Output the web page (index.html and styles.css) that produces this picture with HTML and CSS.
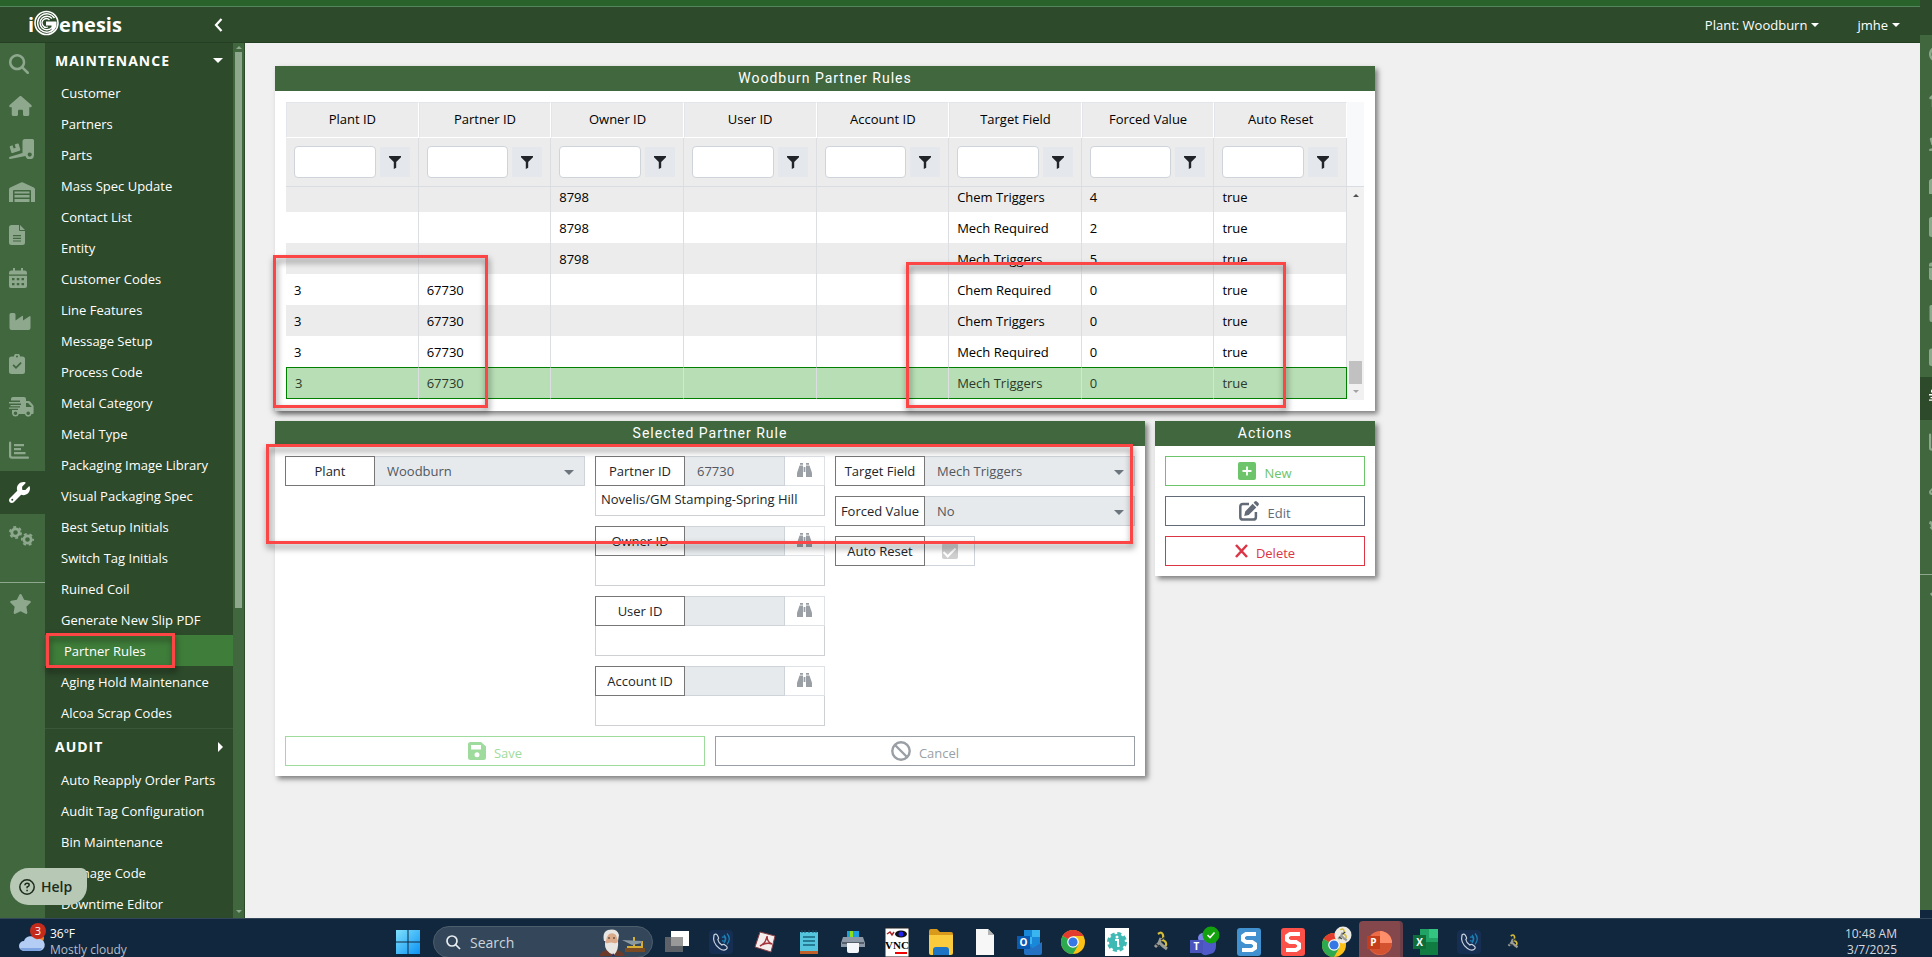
FILE: index.html
```html
<!DOCTYPE html>
<html lang="en">
<head>
    <meta charset="UTF-8">
    <meta name="viewport" content="width=device-width, initial-scale=1.0">
    <title>iGenesis - Partner Rules</title>
    <link rel="stylesheet" href="styles.css">
</head>
<body>

    <!-- icon set -->
    <svg class="sprite" aria-hidden="true">
        <symbol id="i-search" viewBox="0 0 512 512"><path d="M416 208c0 45.900-14.900 88.300-40 122.700L502.600 457.400c12.500 12.500 12.500 32.800 0 45.300s-32.800 12.500-45.300 0L330.700 376c-34.400 25.200-76.800 40-122.700 40C93.100 416 0 322.900 0 208S93.100 0 208 0S416 93.100 416 208zM208 352a144 144 0 1 0 0-288 144 144 0 1 0 0 288z"/></symbol>
        <symbol id="i-home" viewBox="0 0 576 512"><path d="M575.800 255.500c0 18-15 32.100-32 32.100h-32l.7 160.200V472c0 22.100-17.900 40-40 40H392c-22.100 0-40-17.900-40-40V384c0-17.700-14.300-32-32-32H256c-17.700 0-32 14.300-32 32v88c0 22.100-17.900 40-40 40H104c-22.100 0-40-17.900-40-40V287.600H32c-18 0-32-14-32-32.100c0-9 3-17 10-24L266.400 8c7-7 15-8 22-8s15 2 21 7L564.800 231.500c8 7 12 15 11 24z"/></symbol>
        <symbol id="i-ramp" viewBox="0 0 25 20"><path fill-rule="evenodd" d="M16 0h7.500Q25 0 25 1.500V16a4.300 4.300 0 0 1-8.500 1L1.200 20Q0 20 0 19t1-1.200L13.500 14V2.500Q13.500 0 16 0zM20.700 13.500a2 2 0 1 0 0 4.200 2 2 0 1 0 0-4.200zM1.500 7l2-.7 1.200 3.200 2-.7-1-3.300L8.500 4.600q1-.3 1.300.6l1.500 5.300q.2 1-.7 1.300l-7 2.300q-1 .2-1.300-.7L.8 8.300q-.2-1 .7-1.300z"/></symbol>
        <symbol id="i-warehouse" viewBox="0 0 26 20"><path d="M0 20V7.300Q0 6 1.200 5.400L12 .4q1-.4 2 0l10.800 5Q26 6 26 7.300V20h-4V9q0-1-1-1H5Q4 8 4 9v11zM5.500 9.500h15v2h-15zM5.500 13h15v2.500h-15zM5.500 17h15v3h-15z"/></symbol>
        <symbol id="i-file" viewBox="0 0 16 20"><path fill-rule="evenodd" d="M2.500 0H10v5q0 1 1 1h5v11.500q0 2.500-2.500 2.500h-11Q0 20 0 17.500v-15Q0 0 2.500 0zM11 0l5 5h-5zM4 10v1.200h8V10zM4 12.700v1.200h8v-1.200zM4 15.400v1.200h8v-1.200z"/></symbol>
        <symbol id="i-calendar" viewBox="0 0 18 20"><path fill-rule="evenodd" d="M4 0h2v2.500h6V0h2v2.500h2Q18 2.500 18 5v1.500H0V5q0-2.500 2-2.500h2zM0 7.700h18V18q0 2-2 2H2q-2 0-2-2zM3 10v2.300h2.500V10zM7.800 10v2.300h2.500V10zM12.500 10v2.300H15V10zM3 15v2.300h2.500V15zM7.800 15v2.300h2.500V15zM12.500 15v2.300H15V15z"/></symbol>
        <symbol id="i-industry" viewBox="0 0 21 20"><path d="M1.500 2h3Q6 2 6 3.500v6L12.500 5q1-.6 1 .6v4L20 5.200q1-.6 1 .6V17q0 2-2 2H2q-2 0-2-2V3.500Q0 2 1.500 2z"/></symbol>
        <symbol id="i-clipboard" viewBox="0 0 16 20"><path fill-rule="evenodd" d="M5 2.500a3 3 0 0 1 6 0h2.500Q16 2.500 16 5v12.500q0 2.500-2.500 2.500h-11Q0 20 0 17.500V5q0-2.500 2.500-2.500zM8 1.600a1 1 0 1 0 0 2 1 1 0 1 0 0-2zM12.700 9.200l-1.200-1.200L7 12.500l-2.300-2.200-1.200 1.200L7 15z"/></symbol>
        <symbol id="i-truck" viewBox="0 0 25 20"><path fill-rule="evenodd" d="M4 0h11q2 0 2 2v2h2.500q1 0 1.500.6L24 8q.6.600.6 1.400V15q.4 2-1 2h-1a3.500 3.500 0 0 1-6.800 0h-6a3.500 3.500 0 0 1-6.800-.2V13h6v-1.200H0v-1.300h11V9.200H1.500V7.900H12V6.400H0V5h11V3.600H2V2q0-2 2-2zM17 6v4h5.500v-.6L19 6zM6.500 14.500a1.800 1.800 0 1 0 0 3.600 1.800 1.800 0 1 0 0-3.600zM19.200 14.500a1.800 1.800 0 1 0 0 3.600 1.800 1.800 0 1 0 0-3.600z"/></symbol>
        <symbol id="i-chart" viewBox="0 0 20 20"><path d="M1 1.500q1.200 0 1.200 1.200v12.800q0 1 1 1H19q1 0 1 1.200t-1 1.100H3Q0 18.800 0 16V2.700Q0 1.500 1 1.500zM5 4h10v2.300H5zM5 8h7v2.300H5zM5 12h11.500v2.300H5z"/></symbol>
        <symbol id="i-wrench" viewBox="0 0 512 512"><path d="M352 320c88.400 0 160-71.600 160-160c0-15.300-2.200-30.100-6.200-44.200c-3.100-10.800-16.400-13.200-24.300-5.300l-76.800 76.800c-3 3-7.100 4.700-11.300 4.700H336c-8.800 0-16-7.200-16-16V118.600c0-4.200 1.700-8.300 4.700-11.300l76.800-76.800c7.900-7.900 5.400-21.200-5.300-24.300C382.100 2.200 367.300 0 352 0C263.600 0 192 71.600 192 160c0 19.100 3.400 37.500 9.500 54.500L19.900 396.100C7.200 408.800 0 426.100 0 444.100C0 481.600 30.400 512 67.900 512c18 0 35.300-7.200 48-19.900L297.500 310.500c17 6.200 35.400 9.500 54.500 9.500zM80 408a24 24 0 1 1 0 48 24 24 0 1 1 0-48z"/></symbol>
        <symbol id="i-gears" viewBox="0 0 25 20"><g fill="none" stroke="currentColor"><circle cx="6.500" cy="6.500" r="3.700" stroke-width="2.800"/><circle cx="6.500" cy="6.500" r="5.600" stroke-width="1.800" stroke-dasharray="2.930 2.930"/><circle cx="18.500" cy="13.500" r="3.700" stroke-width="2.800"/><circle cx="18.500" cy="13.500" r="5.600" stroke-width="1.800" stroke-dasharray="2.930 2.930" stroke-dashoffset="1.500"/></g></symbol>
        <symbol id="i-star" viewBox="0 0 576 512"><path d="M316.900 18C311.600 7 300.400 0 288.100 0s-23.400 7-28.800 18L195 150.300 51.400 171.500c-12 1.800-22 10.200-25.700 21.700s-.7 24.200 7.900 32.700L137.800 329 113.200 474.700c-2 12 3 24.200 12.900 31.300s23 8 33.800 2.300l128.300-68.500 128.300 68.500c10.800 5.700 23.900 4.900 33.800-2.300s14.900-19.300 12.900-31.300L438.500 329 542.700 225.900c8.600-8.500 11.700-21.200 7.900-32.700s-13.700-19.900-25.700-21.700L381.200 150.300 316.900 18z"/></symbol>
        <symbol id="i-filter" viewBox="0 0 12 13"><path d="M0 0h12v1.200L7.200 6v5.800L4.800 13V6L0 1.200z"/></symbol>
        <symbol id="i-binoculars" viewBox="0 0 15 14"><path d="M3 0h3v1.800H3zM9 0h3v1.800H9zM2.500 2.500H6V14H0v-3.500Q0 9 1 7zM9 2.500h3.500L14 7q1 2 1 3.500V14H9zM6.600 4h1.800v5H6.600z"/></symbol>
        <symbol id="i-phone" viewBox="0 0 24 24"><rect width="24" height="24" rx="4" fill="#162e52"/><path d="M5 5q2-2 3.500.5l1 2q.5 1-.7 2 .7 3.500 4 5.500 1.300-1 2.400-.4l2 1.400q2 1.600 0 3.300-2.700 2-6.700-.8Q3 13 5 5z" fill="none" stroke="#c8d2df" stroke-width="1.200"/><path d="M13 10.500a2 2 0 1 0 0-3M15 13q3.500-4 0-8M18 14.500q4.500-6 0-11" fill="none" stroke="#1b7fb4" stroke-width="1.200"/></symbol>
        <symbol id="i-chrome" viewBox="0 0 24 24"><circle cx="12" cy="12" r="12" fill="#fbc116"/><path d="M12 12L1.600 6A12 12 0 0 1 22.400 6H12z" fill="#e33b2e"/><path d="M12 12L1.600 6A12 12 0 0 0 12 24l5.200-9z" fill="#2da94f"/><circle cx="12" cy="12" r="5.800" fill="#fff"/><circle cx="12" cy="12" r="4.600" fill="#3577e5"/></symbol>
        <symbol id="i-key" viewBox="0 0 24 24"><path d="M9 4q4-3 5 1t-2 5q4 0 5 3t-3 4" fill="none" stroke="#d5bd3a" stroke-width="2.200"/><path d="M12 8l-2 5-4 4M10 12l4 4 4 3" fill="none" stroke="#9a9c98" stroke-width="3"/><path d="M7 14l4 3M12 10l4-3" stroke="#343a3c" stroke-width="1.500"/></symbol>
    </svg>

    <div class="desktop">
        <div class="window">
            <div class="title-strip"></div>
            <header class="topbar">
                <a class="logo" href="#" aria-label="iGenesis">
                    <span>i</span>
                    <svg width="25" height="26" viewBox="0 0 25 26" fill="none" stroke="#fff">
                        <circle cx="12.500" cy="13" r="11.500" stroke-width="1.600"/>
                        <path d="M20.500 8A9.200 9.200 0 1 0 20.500 18" stroke-width="1.400"/>
                        <path d="M18 8.500A6.800 6.800 0 1 0 18 17.500" stroke-width="1.400"/>
                        <path d="M15.500 10A4.300 4.300 0 1 0 14 17" stroke-width="1.300"/>
                        <path d="M12 11.500h10.500v5q-2 4-5 5v-6H12z" fill="#fff" stroke="none"/>
                    </svg>
                    <span>enesis</span>
                </a>
                <button class="collapse-btn" type="button" aria-label="Collapse menu">
                    <svg width="9" height="14" viewBox="0 0 9 14"><path d="M7.500 1L2 7l5.500 6" fill="none" stroke="#fff" stroke-width="2.200"/></svg>
                </button>
                <nav class="user-menu">
                    <a class="dropdown" href="#">Plant: Woodburn</a>
                    <a class="dropdown" href="#">jmhe</a>
                </nav>
            </header>

            <div class="app">
                <nav class="rail" aria-label="Modules">
                    <a href="#" aria-label="Search"><svg width="20" height="20"><use href="#i-search"/></svg></a>
                    <a href="#" aria-label="Home"><svg width="23" height="20"><use href="#i-home"/></svg></a>
                    <a href="#" aria-label="Receiving"><svg width="25" height="20"><use href="#i-ramp"/></svg></a>
                    <a href="#" aria-label="Warehouse"><svg width="26" height="20"><use href="#i-warehouse"/></svg></a>
                    <a href="#" aria-label="Orders"><svg width="16" height="20"><use href="#i-file"/></svg></a>
                    <a href="#" aria-label="Schedule"><svg width="18" height="20"><use href="#i-calendar"/></svg></a>
                    <a href="#" aria-label="Production"><svg width="22" height="20"><use href="#i-industry"/></svg></a>
                    <a href="#" aria-label="Quality"><svg width="16" height="20"><use href="#i-clipboard"/></svg></a>
                    <a href="#" aria-label="Shipping"><svg width="25" height="20"><use href="#i-truck"/></svg></a>
                    <a href="#" aria-label="Reports"><svg width="20" height="20"><use href="#i-chart"/></svg></a>
                    <a href="#" aria-label="Maintenance" class="active"><svg width="21" height="21"><use href="#i-wrench"/></svg></a>
                    <a href="#" aria-label="Settings"><svg width="25" height="20"><use href="#i-gears"/></svg></a>
                    <a href="#" aria-label="Favorites" class="favorites"><svg width="23" height="20"><use href="#i-star"/></svg></a>
                </nav>

                <nav class="sidebar" aria-label="Menu">
                    <h2 class="menu-title">Maintenance <span class="arrow-down"></span></h2>
                    <ul>
                        <li><a href="#">Customer</a></li>
                        <li><a href="#">Partners</a></li>
                        <li><a href="#">Parts</a></li>
                        <li><a href="#">Mass Spec Update</a></li>
                        <li><a href="#">Contact List</a></li>
                        <li><a href="#">Entity</a></li>
                        <li><a href="#">Customer Codes</a></li>
                        <li><a href="#">Line Features</a></li>
                        <li><a href="#">Message Setup</a></li>
                        <li><a href="#">Process Code</a></li>
                        <li><a href="#">Metal Category</a></li>
                        <li><a href="#">Metal Type</a></li>
                        <li><a href="#">Packaging Image Library</a></li>
                        <li><a href="#">Visual Packaging Spec</a></li>
                        <li><a href="#">Best Setup Initials</a></li>
                        <li><a href="#">Switch Tag Initials</a></li>
                        <li><a href="#">Ruined Coil</a></li>
                        <li><a href="#">Generate New Slip PDF</a></li>
                        <li><a href="#" class="active">Partner Rules</a></li>
                        <li><a href="#">Aging Hold Maintenance</a></li>
                        <li><a href="#">Alcoa Scrap Codes</a></li>
                    </ul>
                    <h2 class="menu-title divided">Audit <span class="arrow-right"></span></h2>
                    <ul>
                        <li><a href="#">Auto Reapply Order Parts</a></li>
                        <li><a href="#">Audit Tag Configuration</a></li>
                        <li><a href="#">Bin Maintenance</a></li>
                        <li><a href="#">Damage Code</a></li>
                        <li><a href="#">Downtime Editor</a></li>
                    </ul>
                </nav>
                <div class="menu-scroll">
                    <span class="tri-up"></span>
                    <div class="menu-track"><div class="menu-thumb"></div></div>
                    <span class="tri-down"></span>
                </div>

                <main class="content">
                    <section class="card rules-card">
                        <h1>Woodburn Partner Rules</h1>
                        <div class="grid">
                            <div class="grid-header">
                                <table>
                                    <thead>
                                        <tr>
                                            <th>Plant ID</th>
                                            <th>Partner ID</th>
                                            <th>Owner ID</th>
                                            <th>User ID</th>
                                            <th>Account ID</th>
                                            <th>Target Field</th>
                                            <th>Forced Value</th>
                                            <th>Auto Reset</th>
                                        </tr>
                                        <tr class="filters">
                                            <td><div class="filter"><input type="text" aria-label="Plant ID filter"><button type="button" aria-label="Filter Plant ID"><svg width="12" height="13"><use href="#i-filter"/></svg></button></div></td>
                                            <td><div class="filter"><input type="text" aria-label="Partner ID filter"><button type="button" aria-label="Filter Partner ID"><svg width="12" height="13"><use href="#i-filter"/></svg></button></div></td>
                                            <td><div class="filter"><input type="text" aria-label="Owner ID filter"><button type="button" aria-label="Filter Owner ID"><svg width="12" height="13"><use href="#i-filter"/></svg></button></div></td>
                                            <td><div class="filter"><input type="text" aria-label="User ID filter"><button type="button" aria-label="Filter User ID"><svg width="12" height="13"><use href="#i-filter"/></svg></button></div></td>
                                            <td><div class="filter"><input type="text" aria-label="Account ID filter"><button type="button" aria-label="Filter Account ID"><svg width="12" height="13"><use href="#i-filter"/></svg></button></div></td>
                                            <td><div class="filter"><input type="text" aria-label="Target Field filter"><button type="button" aria-label="Filter Target Field"><svg width="12" height="13"><use href="#i-filter"/></svg></button></div></td>
                                            <td><div class="filter"><input type="text" aria-label="Forced Value filter"><button type="button" aria-label="Filter Forced Value"><svg width="12" height="13"><use href="#i-filter"/></svg></button></div></td>
                                            <td><div class="filter"><input type="text" aria-label="Auto Reset filter"><button type="button" aria-label="Filter Auto Reset"><svg width="12" height="13"><use href="#i-filter"/></svg></button></div></td>
                                        </tr>
                                    </thead>
                                </table>
                            </div>
                            <div class="grid-body">
                                <div class="grid-rows">
                                    <table>
                                        <tbody>
                                            <tr><td></td><td></td><td>8798</td><td></td><td></td><td>Chem Triggers</td><td>4</td><td>true</td></tr>
                                            <tr><td></td><td></td><td>8798</td><td></td><td></td><td>Mech Required</td><td>2</td><td>true</td></tr>
                                            <tr><td></td><td></td><td>8798</td><td></td><td></td><td>Mech Triggers</td><td>5</td><td>true</td></tr>
                                            <tr><td>3</td><td>67730</td><td></td><td></td><td></td><td>Chem Required</td><td>0</td><td>true</td></tr>
                                            <tr><td>3</td><td>67730</td><td></td><td></td><td></td><td>Chem Triggers</td><td>0</td><td>true</td></tr>
                                            <tr><td>3</td><td>67730</td><td></td><td></td><td></td><td>Mech Required</td><td>0</td><td>true</td></tr>
                                            <tr class="selected"><td>3</td><td>67730</td><td></td><td></td><td></td><td>Mech Triggers</td><td>0</td><td>true</td></tr>
                                        </tbody>
                                    </table>
                                </div>
                                <div class="grid-scroll">
                                    <span class="tri-up"></span>
                                    <div class="grid-thumb"></div>
                                    <span class="tri-down"></span>
                                </div>
                            </div>
                        </div>
                        <div class="mark mark-ids"></div>
                        <div class="mark mark-values"></div>
                    </section>

                    <div class="lower">
                        <section class="card">
                            <h1>Selected Partner Rule</h1>
                            <form class="rule-form">
                                <div class="form-col">
                                    <div class="field">
                                        <label for="plant">Plant</label>
                                        <div class="select"><select id="plant" disabled><option>Woodburn</option></select></div>
                                    </div>
                                </div>
                                <div class="form-col">
                                    <div class="lookup">
                                        <div class="field">
                                            <label for="partner">Partner ID</label>
                                            <input id="partner" type="text" value="67730" disabled>
                                            <button type="button" disabled aria-label="Find partner"><svg width="15" height="14"><use href="#i-binoculars"/></svg></button>
                                        </div>
                                        <div class="lookup-name">Novelis/GM Stamping-Spring Hill</div>
                                    </div>
                                    <div class="lookup">
                                        <div class="field">
                                            <label for="owner">Owner ID</label>
                                            <input id="owner" type="text" disabled>
                                            <button type="button" disabled aria-label="Find owner"><svg width="15" height="14"><use href="#i-binoculars"/></svg></button>
                                        </div>
                                        <div class="lookup-name"></div>
                                    </div>
                                    <div class="lookup">
                                        <div class="field">
                                            <label for="user">User ID</label>
                                            <input id="user" type="text" disabled>
                                            <button type="button" disabled aria-label="Find user"><svg width="15" height="14"><use href="#i-binoculars"/></svg></button>
                                        </div>
                                        <div class="lookup-name"></div>
                                    </div>
                                    <div class="lookup">
                                        <div class="field">
                                            <label for="account">Account ID</label>
                                            <input id="account" type="text" disabled>
                                            <button type="button" disabled aria-label="Find account"><svg width="15" height="14"><use href="#i-binoculars"/></svg></button>
                                        </div>
                                        <div class="lookup-name"></div>
                                    </div>
                                </div>
                                <div class="form-col">
                                    <div class="field">
                                        <label for="target">Target Field</label>
                                        <div class="select"><select id="target" disabled><option>Mech Triggers</option></select></div>
                                    </div>
                                    <div class="field">
                                        <label for="forced">Forced Value</label>
                                        <div class="select"><select id="forced" disabled><option>No</option></select></div>
                                    </div>
                                    <div class="field">
                                        <label for="reset">Auto Reset</label>
                                        <div class="check"><input id="reset" type="checkbox" checked disabled></div>
                                    </div>
                                </div>
                                <div class="form-buttons">
                                    <button class="btn save" type="submit" disabled>
                                        <svg width="18" height="18" viewBox="0 0 18 18"><path fill-rule="evenodd" d="M2.500 0H13l5 4.500v11q0 2.500-2.500 2.500h-13Q0 18 0 15.500v-13Q0 0 2.500 0zM3 3v4.500h10V3zM9 10.200a2.500 2.500 0 1 0 0 5 2.500 2.500 0 1 0 0-5z"/></svg>
                                        <span>Save</span>
                                    </button>
                                    <button class="btn cancel" type="button" disabled>
                                        <svg width="20" height="20" viewBox="0 0 20 20"><path d="M10 1.300a8.700 8.700 0 1 0 0 17.400 8.700 8.700 0 1 0 0-17.400zM4 4l12 12" fill="none" stroke="currentColor" stroke-width="2.400"/></svg>
                                        <span>Cancel</span>
                                    </button>
                                </div>
                            </form>
                            <div class="mark mark-form"></div>
                        </section>

                        <section class="card">
                            <h1>Actions</h1>
                            <div class="actions">
                                <button class="btn new" type="button">
                                    <svg width="18" height="18" viewBox="0 0 18 18"><path fill-rule="evenodd" d="M2 0h14q2 0 2 2v14q0 2-2 2H2q-2 0-2-2V2Q0 0 2 0zM8.100 4.500v3.600H4.500v1.800h3.600v3.600h1.800V9.900h3.600V8.100H9.900V4.500z"/></svg>
                                    <span>New</span>
                                </button>
                                <button class="btn edit" type="button">
                                    <svg width="20" height="20" viewBox="0 0 20 20"><path d="M10 3H4Q1.300 3 1.300 5.700v10.200q0 2.700 2.700 2.700h10.200q2.700 0 2.700-2.700V11" fill="none" stroke="currentColor" stroke-width="2.500"/><path d="M13.600 2.700l3.700 3.700-7.600 7.600-4.500 1 1-4.500zM14.600 1.700l1.100-1.100q1.100-1 2.200 0l1.500 1.500q1 1.100 0 2.200l-1.100 1.100z"/></svg>
                                    <span>Edit</span>
                                </button>
                                <button class="btn delete" type="button">
                                    <svg width="13" height="16" viewBox="0 0 13 16"><path d="M1 2l11 12M12 2L1 14" fill="none" stroke="currentColor" stroke-width="2.500"/></svg>
                                    <span>Delete</span>
                                </button>
                            </div>
                        </section>
                    </div>
                </main>
            </div>

            <div class="mark mark-menu"></div>
            <button class="help" type="button">
                <svg width="16" height="16" viewBox="0 0 16 16" fill="none" stroke="#1c2b1c" stroke-width="1.500"><circle cx="8" cy="8" r="7.200"/><path d="M5.900 6.300q.2-2 2.200-2t2.100 1.700q0 1.200-2.100 2v1.200M8.100 10.800v1.500"/></svg>
                Help
            </button>
        </div>

        <!-- edge of the window on the next monitor -->
        <div class="next-window" aria-hidden="true">
            <div class="next-top"></div>
            <div class="rail">
                <span><svg width="20" height="20"><use href="#i-search"/></svg></span>
                <span><svg width="23" height="20"><use href="#i-home"/></svg></span>
                <span><svg width="25" height="20"><use href="#i-ramp"/></svg></span>
                <span><svg width="26" height="20"><use href="#i-warehouse"/></svg></span>
                <span><svg width="16" height="20"><use href="#i-file"/></svg></span>
                <span><svg width="18" height="20"><use href="#i-calendar"/></svg></span>
                <span><svg width="22" height="20"><use href="#i-industry"/></svg></span>
                <span><svg width="16" height="20"><use href="#i-clipboard"/></svg></span>
                <span class="active"><svg width="25" height="20"><use href="#i-truck"/></svg></span>
                <span><svg width="20" height="20"><use href="#i-chart"/></svg></span>
                <span><svg width="21" height="21"><use href="#i-wrench"/></svg></span>
                <span><svg width="25" height="20"><use href="#i-gears"/></svg></span>
                <span class="favorites"><svg width="23" height="20"><use href="#i-star"/></svg></span>
            </div>
            <div class="next-bottom"></div>
        </div>
    </div>

    <footer class="taskbar">
        <div class="weather">
            <svg width="27" height="30" viewBox="0 0 27 30">
                <circle cx="19" cy="15" r="6" fill="#f58220"/>
                <path d="M5 28a5 5 0 0 1 0-10 7 7 0 0 1 12.500-1.500A6 6 0 1 1 19 28z" fill="#b3cdf5"/>
                <path d="M5 28a5 5 0 0 1-4-3h22q-1 3-4 3z" fill="#7fa4e2"/>
                <circle cx="19" cy="8" r="8" fill="#c42b1c"/>
                <text x="19" y="12" class="badge-text">3</text>
            </svg>
            <div>
                <div>36°F</div>
                <div class="muted">Mostly cloudy</div>
            </div>
        </div>

        <div class="tasks">
            <button type="button" aria-label="Start">
                <svg width="24" height="24" viewBox="0 0 24 24"><defs><linearGradient id="win" x2="1" y2="1"><stop stop-color="#7fe0fb"/><stop offset="1" stop-color="#0a93f5"/></linearGradient></defs><path d="M0 0h11.500v11.500H0zM12.500 0H24v11.500H12.500zM0 12.500h11.500V24H0zM12.500 12.500H24V24H12.500z" fill="url(#win)"/></svg>
            </button>
            <label class="task-search">
                <svg width="15" height="15" viewBox="0 0 15 15" fill="none" stroke="#e8edf1" stroke-width="1.700"><circle cx="6" cy="6" r="5"/><path d="M9.500 9.500L14 14"/></svg>
                <input type="text" placeholder="Search" aria-label="Search">
                <svg width="47" height="27" viewBox="0 0 47 27">
                    <path d="M0 27q2-5 8-6h9q7 1 9 6z" fill="#6b3a2a"/><path d="M6 5q6-6 13 0v11q-6 9-13 0z" fill="#d9a98a"/><path d="M5 12Q3 3 9 1q9-2 11 5l-1 6-2-6q-3-3-7-1-3 3-3 7z" fill="#e8e6e2"/><path d="M6 13q1 2 3 1 3-1 6 0 3 1 4-2 1 9-4 14Q5 23 6 13z" fill="#e8e6e2"/><path d="M9 9h2M14 9h2" stroke="#3a2a22"/><path d="M14 24l2 3h-3z" fill="#1d2b7a"/>
                    <path d="M26 19h20v4H26z" fill="#7a4a22"/><path d="M34 8h2v11h-2zM42 12h2v7h-2zM28 17h16v2H28z" fill="#d6ad35"/><path d="M23 11l20 1v2l-10 2z" fill="#8a98a2"/>
                </svg>
            </label>
            <button type="button" aria-label="Task view"><svg width="24" height="24" viewBox="0 0 24 24"><path d="M6 1h18v15H6z" fill="#fff"/><path d="M0 7h18v15H0z" fill="#777" opacity=".75"/></svg></button>
            <button type="button" aria-label="Phone"><svg width="24" height="24"><use href="#i-phone"/></svg></button>
            <button type="button" aria-label="PDF reader"><svg width="22" height="22" viewBox="0 0 22 22"><path d="M6 1l15 4-4 16-16-5z" fill="#f4eeee" stroke="#8b4046"/><path d="M6 15q6-3 7-10 0 6 5 8-6-2-12 2z" fill="none" stroke="#a5353d" stroke-width="1.500"/></svg></button>
            <button type="button" aria-label="Notepad"><svg width="18" height="24" viewBox="0 0 18 24"><path d="M0 2h18v20H0z" fill="#55c5de"/><path d="M0 21h18v3H0z" fill="#c0612b"/><path d="M3 7h12M3 11h12M3 15h12" stroke="#17647d" stroke-width="1.500"/><path d="M2 0v3M5 0v3M9 0v3M13 0v3M16 0v3" stroke="#1d4f66"/></svg></button>
            <button type="button" aria-label="Printer"><svg width="24" height="22" viewBox="0 0 24 22"><path d="M6 0h12v8H6z" fill="#1e9de0"/><path d="M9 0h3v8H9z" fill="#8fe01a"/><path d="M2 6h20l2 6v4H0v-4z" fill="#8d99a6"/><path d="M1 11h22v2H1z" fill="#555f6b"/><path d="M6 12h12v8q0 2-2 2H8q-2 0-2-2z" fill="#f4f7fa"/></svg></button>
            <button type="button" aria-label="VNC"><svg width="24" height="30" viewBox="0 0 24 30"><path d="M0 1h24v29H0z" fill="#fff" stroke="#222"/><path d="M2 7l3-2 2 3 2-3" stroke="#a22" fill="none" stroke-width="1.500"/><ellipse cx="16" cy="7" rx="6" ry="3.500" fill="#111"/><circle cx="16" cy="7" r="2.500" fill="#22e"/><text x="12" y="22" class="vnc-text">VNC</text><path d="M10 26h12" stroke="#e00" stroke-width="2"/></svg></button>
            <button type="button" aria-label="File Explorer"><svg width="24" height="26" viewBox="0 0 24 26"><path d="M0 2Q0 0 2 0h6l3 3h11q2 0 2 2v3H0z" fill="#d99a1c"/><path d="M0 6h24v18q0 2-2 2H2q-2 0-2-2z" fill="#fbcb3e"/><path d="M4 26v-5q0-3 3-3h10q3 0 3 3v5z" fill="#1d74c4"/></svg></button>
            <button type="button" aria-label="Document"><svg width="18" height="26" viewBox="0 0 18 26"><path d="M0 0h12l6 6v20H0z" fill="#f7f7f7"/><path d="M12 0v6h6z" fill="#b5b5b5"/></svg></button>
            <button type="button" aria-label="Outlook"><svg width="25" height="25" viewBox="0 0 25 25"><path d="M7 0h16v20H7z" fill="#1a88d8"/><path d="M15 0h8v7h-8zM7 7h8v7H7z" fill="#39b5f0"/><path d="M7 13l9 5 9-6v11q0 2-2 2H9q-2 0-2-2z" fill="#2471c4"/><path d="M0 6h13v13H0z" fill="#0a5ab2"/><text x="6.500" y="16" class="app-letter">O</text></svg></button>
            <button type="button" aria-label="Chrome"><svg width="24" height="24"><use href="#i-chrome"/></svg></button>
            <button type="button" aria-label="Info"><svg width="24" height="28" viewBox="0 0 24 28"><path d="M0 0h24v28H0z" fill="#fff"/><circle cx="12" cy="14" r="8" fill="#3fb9b4"/><circle cx="12" cy="14" r="8.500" fill="none" stroke="#3fb9b4" stroke-width="3" stroke-dasharray="4 2.680"/><circle cx="12" cy="9" r="1.500" fill="#fff"/><path d="M10 12h3v6h1.500" fill="none" stroke="#fff" stroke-width="2"/></svg></button>
            <button type="button" aria-label="Key tool"><svg width="24" height="24"><use href="#i-key"/></svg></button>
            <button type="button" aria-label="Teams"><svg width="30" height="32" viewBox="0 0 30 32"><circle cx="13" cy="12" r="5" fill="#7b83eb"/><path d="M9 14h17v6q0 7-6 8-9 4-11-6z" fill="#5059c9"/><path d="M0 14h13v13H0z" fill="#4b53bc"/><text x="6.500" y="24" class="app-letter">T</text><circle cx="21" cy="9" r="8.500" fill="#13a10e"/><path d="M17.500 9l2.500 2.500 4.500-5" fill="none" stroke="#fff" stroke-width="1.600"/></svg></button>
            <button type="button" aria-label="Snagit"><svg width="24" height="28" viewBox="0 0 24 28"><rect width="24" height="28" rx="3" fill="#4190cf"/><path d="M19 6H9L6 8v4l3 2h6l3 2v4l-3 2H5" fill="none" stroke="#fff" stroke-width="4"/></svg></button>
            <button type="button" aria-label="Snagit Editor"><svg width="24" height="28" viewBox="0 0 24 28"><rect width="24" height="28" rx="3" fill="#fb5148"/><path d="M19 6H9L6 8v4l3 2h6l3 2v4l-3 2H5" fill="none" stroke="#fff" stroke-width="4"/></svg></button>
            <button type="button" aria-label="Chrome profile"><svg width="30" height="32" viewBox="0 0 30 32"><use href="#i-chrome" x="0" y="7" width="24" height="24"/><circle cx="21" cy="9" r="8.500" fill="#eceae4"/><use href="#i-key" x="12" y="1" width="17" height="17"/></svg></button>
            <button type="button" aria-label="PowerPoint" class="open"><svg width="25" height="26" viewBox="0 0 25 26"><circle cx="13" cy="13" r="12" fill="#ed6c47"/><path d="M13 1a12 12 0 0 1 12 12H13z" fill="#ff8f6b"/><path d="M25 13a12 12 0 0 1-22 6l10-6z" fill="#d35230"/><path d="M0 6h13v13H0z" fill="#c43e1c"/><text x="6.500" y="16" class="app-letter">P</text></svg></button>
            <button type="button" aria-label="Excel"><svg width="25" height="26" viewBox="0 0 25 26"><path d="M7 0h18v26H7z" fill="#21a366"/><path d="M16 0h9v9h-9z" fill="#33c481"/><path d="M7 13h18v13H7z" fill="#107c41"/><path d="M0 6h13v14H0z" fill="#0f6d39"/><text x="6.500" y="17" class="app-letter">X</text></svg></button>
            <button type="button" aria-label="Phone calls"><svg width="24" height="24"><use href="#i-phone"/></svg></button>
            <button type="button" aria-label="Keys"><svg width="18" height="18"><use href="#i-key"/></svg></button>
        </div>

        <div class="clock">
            <div>10:48 AM</div>
            <div>3/7/2025</div>
        </div>
    </footer>

</body>
</html>
```

FILE: styles.css
```css
* {
    box-sizing: border-box;
}
body {
    margin: 0;
    height: 100vh;
    display: flex;
    flex-direction: column;
    overflow: hidden;
    background-color: #11273d;
    font-family: 'Open Sans', 'Noto Sans', sans-serif;
    font-size: 13px;
    color: #212529;
}
a {
    color: inherit;
    text-decoration: none;
}
button, input, select {
    font-family: inherit;
    font-size: inherit;
    margin: 0;
}
svg {
    display: block;
    flex: none;
}
svg:not([fill]) {
    fill: currentColor;
}
.sprite {
    position: absolute;
    width: 0;
    height: 0;
}
.desktop {
    flex: 1;
    min-height: 0;
    display: flex;
}
.window {
    flex: 1;
    min-width: 0;
    display: flex;
    flex-direction: column;
    position: relative;
}

/* --- top bar --- */
.title-strip {
    height: 7px;
    background-color: #29622b;
    border-bottom: 1px solid #55855a;
}
.topbar {
    height: 36px;
    flex: none;
    display: flex;
    align-items: center;
    background-color: #2d4a2b;
    border-bottom: 1px solid #253f24;
    color: #fff;
}
.logo {
    width: 184px;
    padding-left: 28px;
    display: flex;
    align-items: center;
    font-size: 20px;
    line-height: 24px;
    font-weight: 700;
}
.logo svg {
    margin-bottom: 4px;
}
.collapse-btn {
    background: none;
    border: none;
    width: 68px;
    height: 32px;
    padding: 0;
    display: flex;
    align-items: center;
    justify-content: center;
    cursor: pointer;
}
.user-menu {
    margin-left: auto;
    padding-right: 20px;
    display: flex;
    gap: 38px;
}
.dropdown {
    display: flex;
    align-items: center;
    gap: 4px;
}
.dropdown::after {
    content: "";
    border: 4px solid transparent;
    border-top-color: #fff;
    border-bottom: none;
}

/* --- left navigation --- */
.app {
    flex: 1;
    min-height: 0;
    display: flex;
}
.rail {
    width: 45px;
    flex: none;
    background-color: #41673f;
    color: #8ea88d;
    display: flex;
    flex-direction: column;
}
.rail > * {
    height: 43px;
    flex: none;
    padding-left: 9px;
    display: flex;
    align-items: center;
}
.rail > :first-child {
    height: 41px;
}
.rail > .active {
    background-color: #2d4a2b;
    color: #fff;
}
.rail > .favorites {
    margin-top: 25px;
    border-top: 1px solid #8ea88d;
}
.sidebar {
    width: 188px;
    flex: none;
    overflow: hidden;
    background-color: #2d4a2b;
    color: #fff;
}
.sidebar ul {
    list-style: none;
    margin: 0;
    padding: 0;
}
.sidebar li a {
    display: block;
    height: 31px;
    line-height: 33px;
    padding-left: 16px;
    white-space: nowrap;
}
.sidebar li a.active {
    background-color: #3f7d3a;
    border-left: 3px solid #3f7d3a;
}
.menu-title {
    height: 34px;
    margin: 0;
    padding: 0 10px;
    display: flex;
    align-items: center;
    justify-content: space-between;
    font-size: 14px;
    font-weight: 700;
    letter-spacing: 1px;
    text-transform: uppercase;
}
.menu-title.divided {
    height: 36px;
    border-top: 1px solid #3a573a;
}
.arrow-down {
    border: 5px solid transparent;
    border-top-color: #fff;
    border-bottom: none;
}
.arrow-right {
    border: 5px solid transparent;
    border-left-color: #fff;
    border-right: none;
}
.menu-scroll {
    width: 12px;
    flex: none;
    padding: 3px 0 5px;
    display: flex;
    flex-direction: column;
    align-items: center;
    gap: 3px;
    background-color: #41673f;
    border-right: 1px solid #2d4a2b;
    color: #8ea88d;
}
.menu-track {
    flex: 1;
}
.menu-thumb {
    width: 7px;
    height: 65%;
    background-color: #8ea88d;
}
.tri-up, .tri-down {
    border: 3px solid transparent;
}
.tri-up {
    border-top: none;
    border-bottom-color: currentColor;
}
.tri-down {
    border-bottom: none;
    border-top-color: currentColor;
}

/* --- cards --- */
.content {
    flex: 1;
    min-width: 0;
    padding: 23px 30px;
    background-color: #f0f0f0;
}
.card {
    position: relative;
    background-color: #fff;
    box-shadow: 3px 3px 5px #7f7f7f;
}
.card h1 {
    margin: 0;
    height: 25px;
    line-height: 25px;
    background-color: #41673f;
    color: #fff;
    text-align: center;
    font-family: Roboto, sans-serif;
    font-size: 14px;
    font-weight: 400;
    letter-spacing: 1px;
}
.rules-card, .lower {
    max-width: 1100px;
}
.lower {
    margin-top: 10px;
    display: grid;
    grid-template-columns: 1fr 220px;
    gap: 10px;
    align-items: start;
}

/* --- grid --- */
.grid {
    padding: 11px;
    color: #000;
}
.grid table {
    width: 100%;
    table-layout: fixed;
    border-collapse: separate;
    border-spacing: 0;
}
.grid-header {
    padding-right: 17px;
    background-color: #f8f9fb;
    border-bottom: 1px solid #d9dce1;
}
.grid th {
    height: 36px;
    padding: 0 0 2px;
    background-color: #ececec;
    border: 1px solid #e3e5ea;
    border-right-color: #fff;
    border-bottom-color: #fff;
    font-weight: 400;
    text-align: center;
}
.filters td {
    height: 48px;
    padding: 0 8px;
    background-color: #ececec;
    border-right: 1px solid #dcdee1;
}
.filter {
    display: flex;
    align-items: center;
    gap: 4px;
}
.filter input {
    flex: 1;
    min-width: 0;
    height: 32px;
    border: 1px solid #ced4da;
    border-radius: 4px;
    background-color: #fff;
}
.filter button {
    width: 30px;
    height: 30px;
    padding: 0;
    border: none;
    background-color: #e4e7eb;
    color: #212529;
    display: flex;
    align-items: center;
    justify-content: center;
}
.grid-body {
    height: 213px;
    display: flex;
}
.grid-rows {
    flex: 1;
    overflow: hidden;
    padding-bottom: 1px;
    display: flex;
    align-items: flex-end;
}
.grid-rows td {
    height: 31px;
    padding: 0 8px;
    border-right: 1px solid #dcdee1;
}
.grid-rows tr:nth-child(odd) td {
    background-color: #ececec;
}
.grid-rows tr.selected td {
    height: 32px;
    background-color: #b8deb5;
    border-top: 1px solid #008000;
    border-bottom: 1px solid #008000;
    color: #2b3a2b;
}
.grid-rows tr.selected td:first-child {
    border-left: 1px solid #008000;
}
.grid-rows tr.selected td:last-child {
    border-right-color: #008000;
}
.grid-scroll {
    width: 17px;
    padding: 7px 0;
    display: flex;
    flex-direction: column;
    align-items: center;
    gap: 6px;
    background-color: #f1f1f1;
    color: #505050;
}
.grid-scroll .tri-down {
    color: #a3a3a3;
}
.grid-thumb {
    width: 13px;
    height: 23px;
    margin-top: auto;
    background-color: #c1c1c1;
}

/* --- form --- */
.rule-form {
    padding: 10px;
    display: grid;
    grid-template-columns: 1fr 230px 1fr;
    gap: 10px;
}
.form-col {
    display: flex;
    flex-direction: column;
    gap: 10px;
}
.field {
    height: 30px;
    display: flex;
}
.field label {
    width: 90px;
    flex: none;
    border: 1px solid #777;
    line-height: 28px;
    text-align: center;
    white-space: nowrap;
}
.select {
    flex: 1;
    position: relative;
}
.select::after {
    content: "";
    position: absolute;
    right: 11px;
    top: 14px;
    border: 5px solid transparent;
    border-top-color: #6c757d;
    border-bottom: none;
}
.select select, .field input[type="text"] {
    width: 100%;
    height: 30px;
    padding: 0 12px;
    border: 1px solid #ced4da;
    border-left: none;
    border-radius: 0;
    appearance: none;
    background-color: #e7eaed;
    color: #50575e;
    opacity: 1;
}
.field input[type="text"] {
    width: 100px;
    flex: 1;
}
.field button {
    width: 40px;
    height: 30px;
    padding: 0 0 3px;
    border: 1px solid #dee2e6;
    border-left: none;
    background-color: #fff;
    color: #9a9fa5;
    display: flex;
    align-items: center;
    justify-content: center;
}
.lookup-name {
    height: 30px;
    padding: 0 5px;
    border: 1px solid #ced0d3;
    border-top: none;
    line-height: 26px;
    white-space: nowrap;
}
.check {
    width: 50px;
    border: 1px solid #ced4da;
    border-left: none;
    display: flex;
    align-items: center;
    justify-content: center;
}
.check input {
    appearance: none;
    width: 16px;
    height: 16px;
    border-radius: 2px;
    background-color: #cfcfcf;
    display: flex;
    align-items: center;
    justify-content: center;
}
.check input::after {
    content: "";
    width: 5px;
    height: 10px;
    border: solid #fff;
    border-width: 0 2px 2px 0;
    transform: rotate(45deg);
}
.form-buttons {
    grid-column: 1 / -1;
    display: grid;
    grid-template-columns: 1fr 1fr;
    gap: 10px;
}
.actions {
    padding: 10px;
    display: flex;
    flex-direction: column;
    gap: 10px;
}
.btn {
    height: 30px;
    padding: 0;
    border: 1px solid currentColor;
    background-color: #fff;
    display: flex;
    align-items: center;
    justify-content: center;
    gap: 8px;
}
.btn span {
    padding-top: 4px;
}
.btn.save {
    color: #9fdb9c;
}
.btn.cancel {
    color: #9a9fa5;
}
.btn.new {
    color: #6ec46a;
}
.btn.edit {
    color: #626b77;
}
.btn.delete {
    color: #dc3545;
}

/* --- red callouts over the screen --- */
.mark {
    position: absolute;
    border: 3px solid #fc4545;
    filter: drop-shadow(1px 4px 3px rgba(0, 0, 0, 0.5));
    pointer-events: none;
}
.mark-ids {
    left: -2px;
    top: 189px;
    width: 215px;
    height: 153px;
}
.mark-values {
    right: 89px;
    top: 196px;
    width: 380px;
    height: 146px;
}
.mark-form {
    left: -9px;
    right: 12px;
    top: 23px;
    height: 100px;
}
.mark-menu {
    left: 46px;
    top: 633px;
    width: 129px;
    height: 35px;
}
.help {
    position: absolute;
    left: 10px;
    bottom: 13px;
    width: 77px;
    height: 37px;
    padding: 0 0 0 9px;
    border: none;
    border-radius: 19px 6px 19px 19px;
    background-color: #b7c8b5;
    color: #1c2b1c;
    display: flex;
    align-items: center;
    gap: 6px;
    font-size: 14px;
    font-weight: 600;
}

/* --- neighbouring window --- */
.next-window {
    width: 12px;
    flex: none;
    overflow: hidden;
    display: flex;
    flex-direction: column;
}
.next-top {
    height: 35px;
    flex: none;
    background-color: #2d4a2b;
}
.next-window .rail {
    flex: 1;
}
.next-bottom {
    height: 8px;
    flex: none;
    background-color: #11273d;
}

/* --- taskbar --- */
.taskbar {
    height: 39px;
    flex: none;
    overflow: hidden;
    position: relative;
    display: flex;
    align-items: flex-start;
    justify-content: space-between;
    border-top: 1px solid #34475a;
    background-color: #11273d;
    color: #fff;
    font-size: 12px;
    line-height: 16px;
}
.weather {
    width: 386px;
    padding: 6px 0 0 19px;
    display: flex;
    gap: 4px;
}
.weather svg {
    margin-top: -2px;
}
.weather > div {
    padding-top: 1px;
}
.muted {
    color: #b5bdc6;
}
.badge-text {
    font-size: 11px;
    fill: #fff;
    text-anchor: middle;
}
.vnc-text {
    font-family: 'Liberation Serif', serif;
    font-size: 11px;
    font-weight: 700;
    fill: #000;
    text-anchor: middle;
}
.app-letter {
    font-size: 10px;
    font-weight: 700;
    fill: #fff;
    text-anchor: middle;
}
.tasks {
    flex: 1;
    display: flex;
    height: 46px;
}
.tasks button {
    width: 44px;
    padding: 0;
    border: none;
    background: none;
    display: flex;
    align-items: center;
    justify-content: center;
}
.tasks button.open {
    height: 44px;
    margin-top: 2px;
    border-radius: 4px;
    border-right: 3px solid #6b3e48;
    background-color: #84474c;
}
.task-search {
    width: 220px;
    height: 32px;
    margin: 7px 2px 0 3px;
    padding: 0 6px 0 12px;
    display: flex;
    align-items: center;
    gap: 9px;
    border: 1px solid #4c5d6c;
    border-radius: 16px;
    background-color: #34475a;
}
.task-search input {
    flex: 1;
    min-width: 0;
    padding: 0;
    border: none;
    background: none;
    font-size: 14px;
    color: #fff;
}
.task-search input::placeholder {
    color: #cdd4da;
}
.clock {
    padding: 7px 35px 0 0;
    text-align: right;
    color: #d5dae0;
}
```
